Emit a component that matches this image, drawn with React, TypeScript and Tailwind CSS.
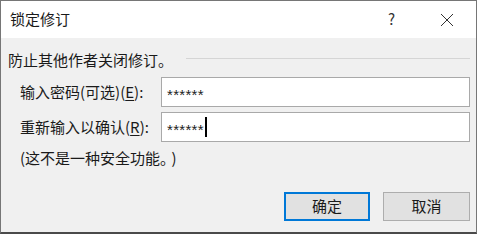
const font = { fontFamily: '"Noto Sans CJK SC", "Noto Sans", sans-serif' };

function Field({ label, hotkey, rest, caret }: { label: string; hotkey: string; rest: string; caret?: boolean }) {
  return (
    <div className="flex h-[30px] items-center">
      <div className="w-[141px] text-[15px] text-[#1a1a1a]">
        {label}(<span className="underline underline-offset-2">{hotkey}</span>){rest}
      </div>
      <div className="flex h-[30px] flex-1 items-center border border-[#a9a9a9] bg-white pl-[5px]">
        <span className="font-['Liberation_Sans'] text-[15px] leading-none tracking-[0.3px] text-[#222] pt-[4px]">******</span>
        {caret && <span className="ml-[1px] h-[20px] w-[2px] bg-black" />}
      </div>
    </div>
  );
}

export default function App() {
  return (
    <div className="flex h-[234px] w-[477px] flex-col border border-b-2 border-[#767676] border-b-[#4a4a4a] bg-[#f0f0f0]" style={font}>
      <div className="flex h-[37px] shrink-0 items-center bg-white pl-[9px]">
        <span className="text-[15px] text-[#1a1a1a]">锁定修订</span>
        <span className="ml-auto mr-[45px] text-[15px] text-[#333]">?</span>
        <svg width="14" height="14" viewBox="0 0 14 14" className="mr-[22px]">
          <path d="M1 1 L13 13 M13 1 L1 13" stroke="#333" strokeWidth="1" />
        </svg>
      </div>
      <div className="flex flex-1 flex-col pl-[7px] pr-[6px] pt-[11px]">
        <div className="flex h-[22px] items-center">
          <span className="text-[15px] text-[#1a1a1a]">防止其他作者关闭修订。</span>
          <div className="ml-[13px] mt-[-3px] h-px flex-1 bg-[#d5d5d5]" />
        </div>
        <div className="mt-[6px] flex flex-col gap-[5px] pl-[12px]">
          <Field label="输入密码(可选)" hotkey="E" rest=":" />
          <Field label="重新输入以确认" hotkey="R" rest=":" caret />
        </div>
        <div className="mt-[5px] pl-[12px] text-[15px] leading-[22px] text-[#1a1a1a]">
          (这不是一种安全功能。<span className="ml-[4px]">)</span>
        </div>
        <div className="mt-[23px] flex justify-end gap-[13px]">
          <button className="h-[29px] w-[86px] border-2 border-[#0078d7] bg-[#e1e1e1] text-[15px] text-[#1a1a1a]">确定</button>
          <button className="h-[29px] w-[87px] border border-[#adadad] bg-[#e1e1e1] text-[15px] text-[#1a1a1a]">取消</button>
        </div>
      </div>
    </div>
  );
}
